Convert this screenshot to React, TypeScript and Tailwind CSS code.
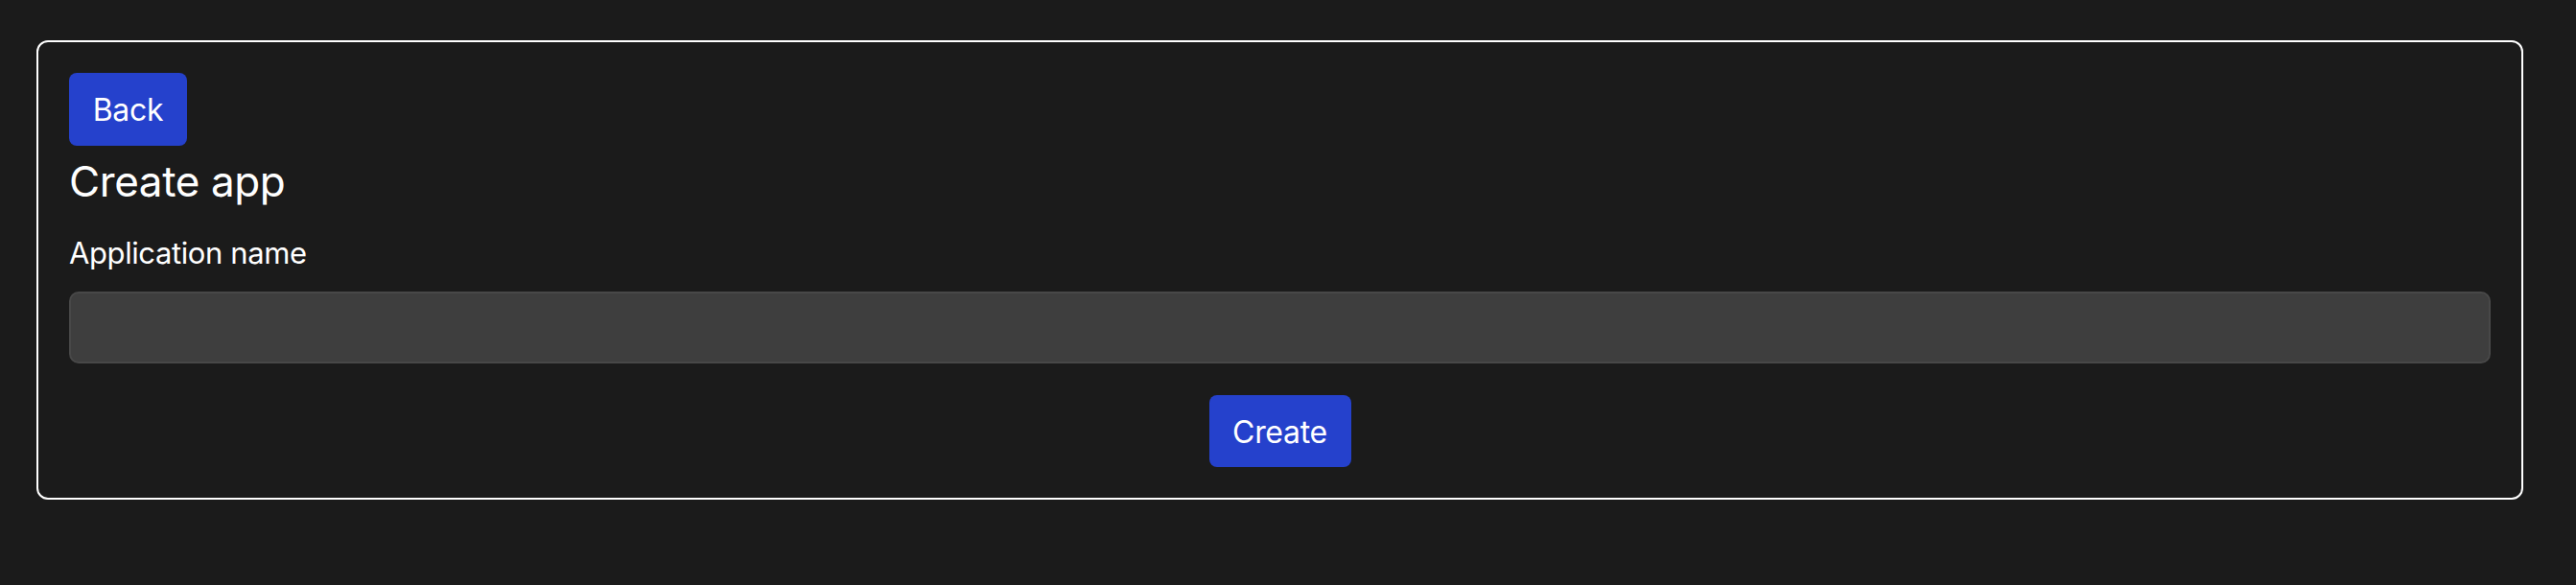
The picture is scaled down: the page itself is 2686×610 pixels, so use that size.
import React, { useState } from 'react';

export default function App() {
    const [name, setName] = useState('');

    return (
        <div className="min-h-[610px] w-full bg-[#1b1b1b] pt-[42px] pl-[38px]" style={{ fontFamily: 'Inter, "Noto Sans", sans-serif' }}>
            <div className="w-[2593px] rounded-[12px] border-2 border-white p-8 text-white">
                <div className="flex flex-col">
                    <button className="h-[76px] w-[123px] rounded-[8px] bg-[#2541cc] pt-[2px] text-[32px] tracking-[-0.3px] text-white">
                        Back
                    </button>
                    <h2 className="mt-[11px] text-[44px] leading-[53px] tracking-[-0.4px]">Create app</h2>
                    <label className="mt-[24px] text-[31px] leading-[48px] tracking-[-0.4px]">Application name</label>
                    <input
                        type="text"
                        value={name}
                        onChange={(e) => setName(e.target.value)}
                        className="mt-[16px] h-[75px] w-full rounded-[10px] border-2 border-[#484848] bg-[#3e3e3e] px-5 text-[32px] text-white outline-none"
                    />
                    <div className="mt-[33px] flex justify-center">
                        <button className="h-[75px] w-[148px] rounded-[8px] bg-[#2541cc] pt-[2px] text-[32px] tracking-[-0.3px] text-white">
                            Create
                        </button>
                    </div>
                </div>
            </div>
        </div>
    );
}
